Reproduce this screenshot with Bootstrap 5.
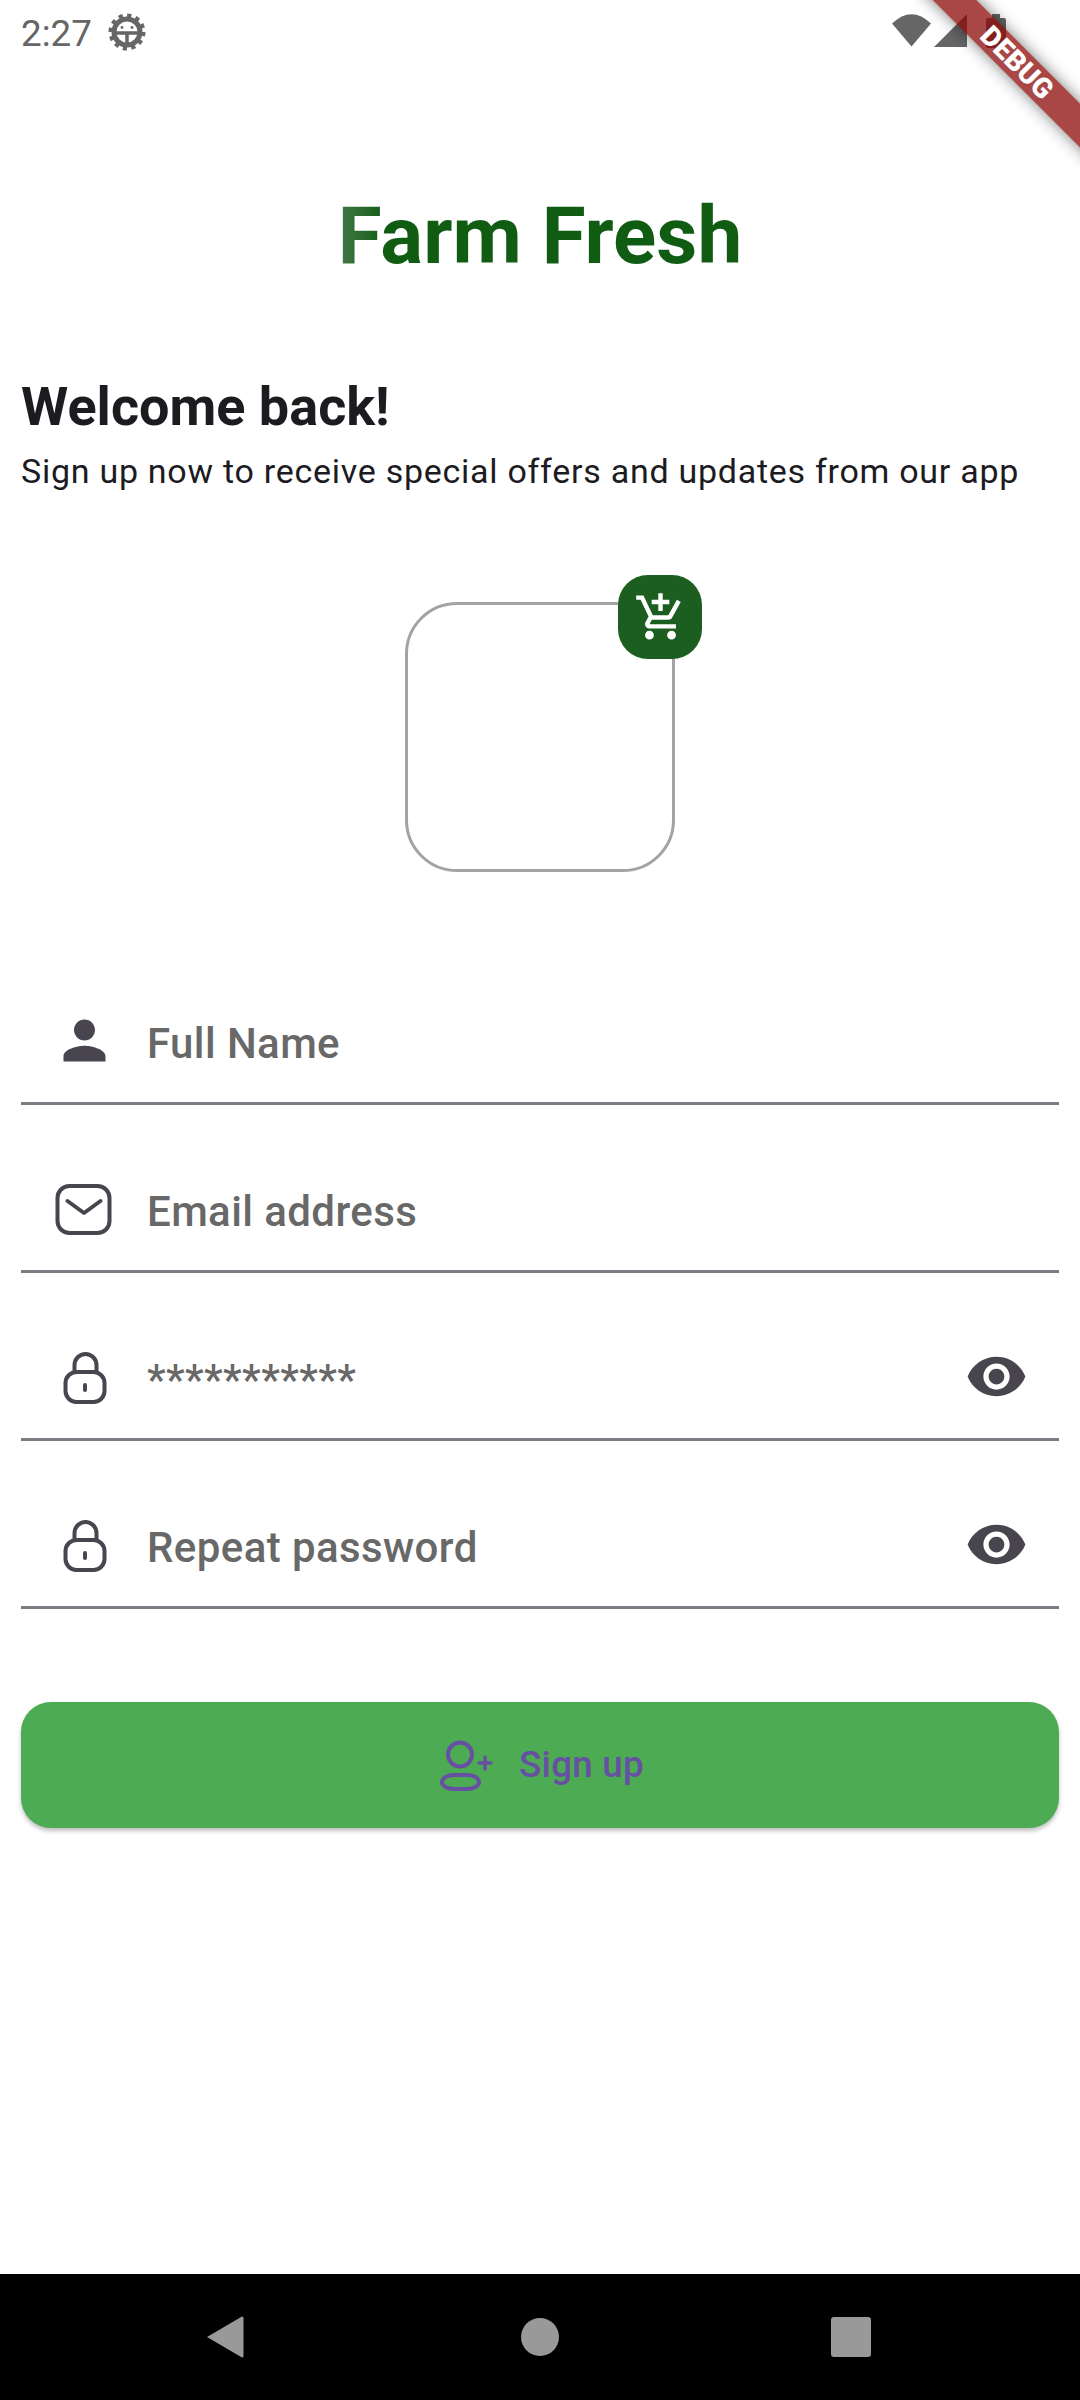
<!DOCTYPE html>
<html lang="en">
<head>
  <meta charset="UTF-8">
  <meta name="viewport" content="width=device-width, initial-scale=1.0">
  <title>Farm Fresh - Sign up</title>
  <link href="https://cdn.jsdelivr.net/npm/bootstrap@5.3.0/dist/css/bootstrap.min.css" rel="stylesheet">
  <script src="https://cdn.jsdelivr.net/npm/bootstrap@5.3.0/dist/js/bootstrap.bundle.min.js"></script>
  <style>
    body {
      font-family: Roboto, "Liberation Sans", sans-serif;
      background-color: #fff;
      height: 2400px;
      overflow: hidden;
    }

    .status-strip {
      height: 63px;
      padding: 14px 21px 0;
      color: #666;
    }

    .status-time {
      margin: 2px 16px 0 0;
      font-size: 36.75px;
      line-height: 1;
    }

    .status-gear {
      margin-top: -1px;
    }

    .status-wifi {
      margin-right: 3px;
    }

    .status-batt {
      margin: 0 53px 0 19px;
    }

    .ribbon-corner {
      position: absolute;
      top: 0;
      right: 0;
      width: 220px;
      height: 220px;
      overflow: hidden;
      pointer-events: none;
    }

    .debug-ribbon {
      position: absolute;
      top: 47px;
      left: 7px;
      width: 300px;
      height: 31px;
      line-height: 31px;
      transform: rotate(45deg);
      background-color: rgba(140, 10, 10, .75);
      box-shadow: 0 0 16px rgba(0, 0, 0, .5);
      color: #fff;
      font-size: 28px;
      font-weight: 900;
      text-align: center;
    }

    .brand-title {
      margin: 127px 0 0;
      color: #115c13;
      font-size: 80px;
      font-weight: 700;
      line-height: 92px;
      text-align: center;
    }

    .brand-title span {
      background: linear-gradient(90deg, #44784a, #115c13 12%);
      -webkit-background-clip: text;
      background-clip: text;
      color: transparent;
    }

    .intro-block {
      margin-top: 93px;
      padding: 0 21px;
    }

    .intro-title {
      margin: 0;
      color: #1c1b1f;
      font-size: 54px;
      font-weight: 700;
      line-height: 64px;
    }

    .intro-text {
      margin: 7px 0 0;
      color: #1c1b1f;
      font-size: 34px;
      letter-spacing: .73px;
      line-height: 50px;
    }

    .photo-box {
      width: 270px;
      height: 270px;
      margin: 106px auto 0;
      border: 3px solid #a3a3a3;
      border-radius: 52px;
    }

    .photo-badge {
      position: absolute;
      top: -30px;
      right: -30px;
      width: 84px;
      height: 84px;
      border-radius: 30px;
      background-color: #1c5e20;
    }

    .field-list {
      margin-top: 107px;
      padding: 0 21px;
    }

    .field-row {
      height: 126px;
      margin-top: 42px;
      padding: 0 31.5px;
      border-bottom: 3px solid #7f7b85;
      color: #49454f;
    }

    .field-row:first-child {
      margin-top: 0;
    }

    .field-row .form-control {
      flex: 1;
      padding: 6px 0 0;
      margin-left: 31.5px;
      border: 0;
      border-radius: 0;
      background: transparent;
      box-shadow: none;
      color: #686868;
      font-size: 42px;
      font-weight: 500;
      letter-spacing: .4px;
    }

    .field-row .form-control::placeholder {
      color: #686868;
      opacity: 1;
    }

    .signup-btn {
      display: flex;
      align-items: center;
      justify-content: center;
      gap: 26px;
      width: 1038px;
      height: 126px;
      margin: 93px 21px 0;
      padding: 0 0 0 4px;
      border: 0;
      border-radius: 30px;
      background-color: #4cab53;
      box-shadow: 0 3px 4px rgba(0, 0, 0, .25);
      color: #6750a4;
      font-size: 36.75px;
      font-weight: 500;
      letter-spacing: .26px;
    }

    .signup-btn:hover {
      background-color: #4cab53;
      color: #6750a4;
    }

    .system-nav {
      height: 126px;
      background-color: #000;
    }

    .system-nav-slot {
      width: 315px;
    }
  </style>
</head>
<body class="d-flex flex-column">
  <!-- Status bar -->
  <div class="status-strip d-flex align-items-start">
    <span class="status-time">2:27</span>
    <svg class="status-gear" width="38" height="38" viewBox="0 0 38 38" fill="none" stroke="#666">
      <circle cx="19" cy="19" r="13" stroke-width="5"/>
      <circle cx="19" cy="19" r="16.5" stroke-width="4" stroke-dasharray="4.2 4.4"/>
      <path d="M6 20h26M19 20v12" stroke-width="3.5"/>
      <circle cx="14" cy="14.5" r="1.4" fill="#666" stroke="none"/>
      <circle cx="24" cy="14.5" r="1.4" fill="#666" stroke="none"/>
    </svg>
    <svg class="status-wifi ms-auto" width="39" height="33" viewBox="0 0 39 33" fill="#666">
      <path d="M0 9.500Q19.500-9 39 9.500L19.500 32.500Z"/>
    </svg>
    <svg width="33" height="33" viewBox="0 0 33 33" fill="#666">
      <path d="M0 33L33 0V33Z"/>
    </svg>
    <svg class="status-batt" width="20" height="34" viewBox="0 0 20 34" fill="#666">
      <path d="M6 0h8v4h4a2 2 0 0 1 2 2v26a2 2 0 0 1-2 2H2a2 2 0 0 1-2-2V6a2 2 0 0 1 2-2h4Z"/>
    </svg>
  </div>
  <div class="ribbon-corner"><div class="debug-ribbon">DEBUG</div></div>

  <h1 class="brand-title"><span>Farm Fresh</span></h1>

  <div class="intro-block">
    <h2 class="intro-title">Welcome back!</h2>
    <p class="intro-text">Sign up now to receive special offers and updates from our app</p>
  </div>

  <!-- Profile picture -->
  <div class="photo-box position-relative">
    <div class="photo-badge d-flex align-items-center justify-content-center">
      <svg width="53" height="53" viewBox="0 0 24 24" fill="#fff">
        <path d="M11 9h2V6h3V4h-3V1h-2v3H8v2h3v3zm-4 9c-1.100 0-1.990.9-1.990 2S5.900 22 7 22s2-.9 2-2-.9-2-2-2zm10 0c-1.100 0-1.990.9-1.990 2s.89 2 1.990 2 2-.9 2-2-.9-2-2-2zm-9.830-3.250l.03-.12.9-1.630h7.450c.75 0 1.410-.41 1.750-1.030l3.860-7.010L19.420 4h-.01l-1.100 2-2.760 5H8.530l-.13-.27L6.160 6l-.95-2-.94-2H1v2h2l3.600 7.590-1.350 2.450c-.16.28-.25.61-.25.96 0 1.100.9 2 2 2h12v-2H7.420c-.13 0-.25-.11-.25-.25z"/>
      </svg>
    </div>
  </div>

  <!-- Sign up form -->
  <form class="field-list">
    <div class="field-row d-flex align-items-center">
      <svg width="63" height="63" viewBox="0 0 24 24" fill="currentColor">
        <path d="M12 12c2.210 0 4-1.790 4-4s-1.790-4-4-4-4 1.790-4 4 1.790 4 4 4zm0 2c-2.670 0-8 1.340-8 4v2h16v-2c0-2.660-5.330-4-8-4z"/>
      </svg>
      <input class="form-control" type="text" placeholder="Full Name">
    </div>
    <div class="field-row d-flex align-items-center">
      <svg width="63" height="63" viewBox="0 0 63 63" fill="none" stroke="currentColor" stroke-width="4" stroke-linecap="round" stroke-linejoin="round">
        <rect x="4.500" y="9" width="52" height="47" rx="12"/>
        <path d="M14.500 24L31 36l16.500-12"/>
      </svg>
      <input class="form-control" type="email" placeholder="Email address">
    </div>
    <div class="field-row d-flex align-items-center">
      <svg width="63" height="63" viewBox="0 0 63 63" fill="none" stroke="currentColor" stroke-width="4" stroke-linecap="round" stroke-linejoin="round">
        <rect x="12.500" y="27" width="39" height="30" rx="11"/>
        <path d="M21.500 27v-7a11 11 0 0 1 22 0v7M32 40v5"/>
      </svg>
      <input class="form-control" type="text" placeholder="***********">
      <svg width="63" height="63" viewBox="0 0 24 24" fill="currentColor">
        <path d="M12 4.500C7 4.500 2.730 7.610 1 12c1.730 4.390 6 7.500 11 7.500s9.270-3.110 11-7.500c-1.730-4.390-6-7.500-11-7.500zM12 17c-2.760 0-5-2.240-5-5s2.240-5 5-5 5 2.240 5 5-2.240 5-5 5zm0-8c-1.660 0-3 1.340-3 3s1.340 3 3 3 3-1.340 3-3-1.340-3-3-3z"/>
      </svg>
    </div>
    <div class="field-row d-flex align-items-center">
      <svg width="63" height="63" viewBox="0 0 63 63" fill="none" stroke="currentColor" stroke-width="4" stroke-linecap="round" stroke-linejoin="round">
        <rect x="12.500" y="27" width="39" height="30" rx="11"/>
        <path d="M21.500 27v-7a11 11 0 0 1 22 0v7M32 40v5"/>
      </svg>
      <input class="form-control" type="password" placeholder="Repeat password">
      <svg width="63" height="63" viewBox="0 0 24 24" fill="currentColor">
        <path d="M12 4.500C7 4.500 2.730 7.610 1 12c1.730 4.390 6 7.500 11 7.500s9.270-3.110 11-7.500c-1.730-4.390-6-7.500-11-7.500zM12 17c-2.760 0-5-2.240-5-5s2.240-5 5-5 5 2.240 5 5-2.240 5-5 5zm0-8c-1.660 0-3 1.340-3 3s1.340 3 3 3 3-1.340 3-3-1.340-3-3-3z"/>
      </svg>
    </div>
  </form>

  <button type="button" class="btn signup-btn">
    <svg width="53" height="53" viewBox="0 0 53 53" fill="none" stroke="currentColor" stroke-linecap="round">
      <circle cx="20" cy="15.500" r="12" stroke-width="4"/>
      <rect x="2" y="36" width="37" height="14" rx="12" ry="7" stroke-width="4"/>
      <path d="M45 18v12M39 24h12" stroke-width="3.500"/>
    </svg>
    <span>Sign up</span>
  </button>

  <!-- Android navigation bar -->
  <div class="system-nav mt-auto d-flex align-items-center justify-content-center">
    <div class="system-nav-slot d-flex justify-content-center">
      <svg width="44" height="44" viewBox="0 0 44 44" fill="#999">
        <path d="M4 22L39 1.500a1.500 1.500 0 0 1 1.500 1.500v38a1.500 1.500 0 0 1-1.500 1.500Z"/>
      </svg>
    </div>
    <div class="system-nav-slot d-flex justify-content-center">
      <svg width="38" height="38" viewBox="0 0 38 38" fill="#999"><circle cx="19" cy="19" r="19"/></svg>
    </div>
    <div class="system-nav-slot d-flex justify-content-center">
      <svg width="48" height="40" viewBox="0 0 48 40" fill="#999"><rect x="0" y="0" width="40" height="40" rx="3"/></svg>
    </div>
  </div>
</body>
</html>
